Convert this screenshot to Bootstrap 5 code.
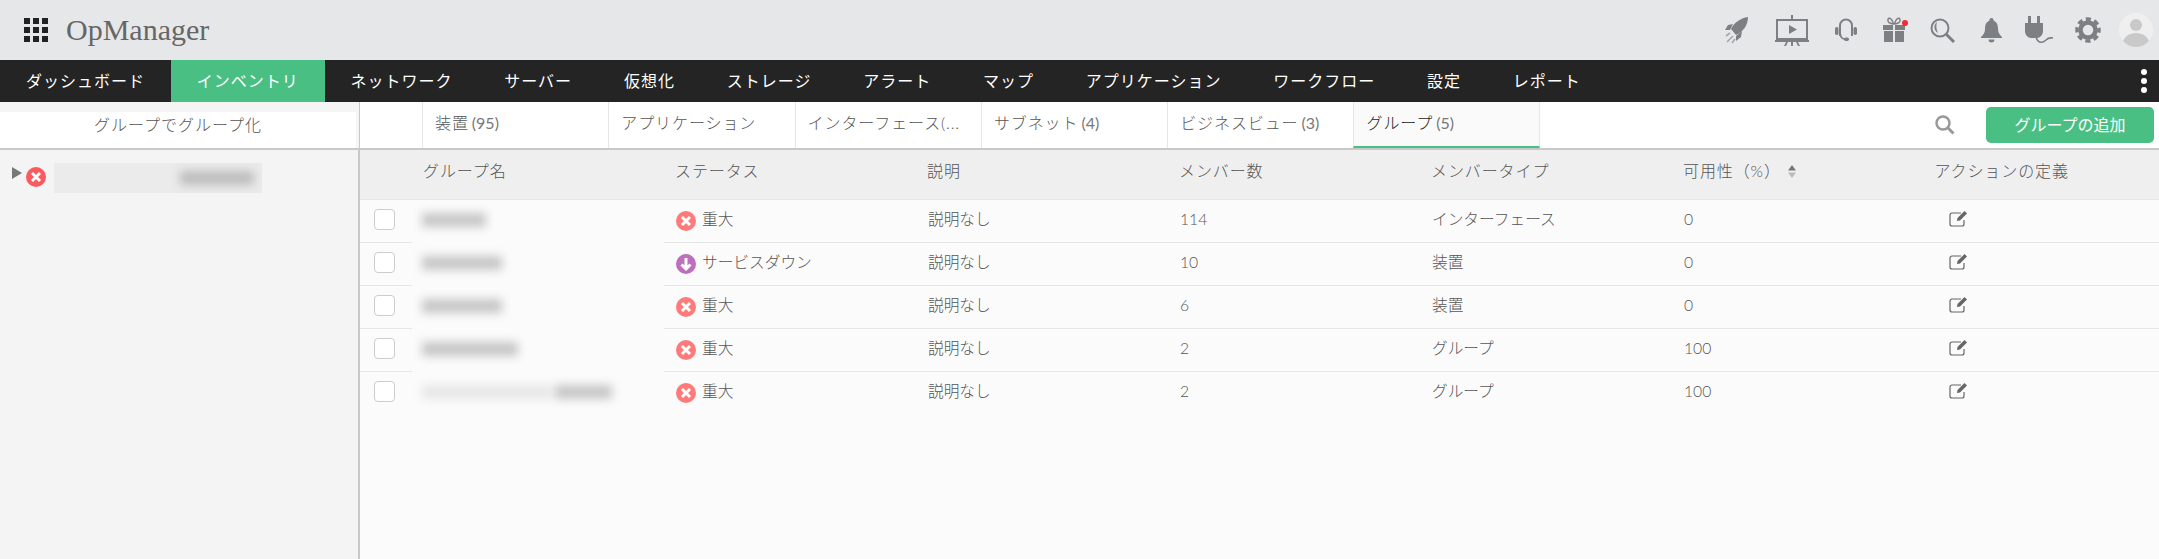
<!DOCTYPE html>
<html lang="ja">
<head>
    <meta charset="UTF-8">
    <meta name="viewport" content="width=device-width, initial-scale=1.0">
    <title>OpManager</title>
    <link href="https://cdn.jsdelivr.net/npm/bootstrap@5.3.2/dist/css/bootstrap.min.css" rel="stylesheet">
    <style>
        body {
            height: 559px;
            overflow: hidden;
            background-color: #fbfbfb;
            font-family: Lato, "Noto Sans CJK JP", sans-serif;
            font-weight: 300;
            color: #555;
        }
        .top-head {
            height: 60px;
            background-color: #e6e7e9;
            padding-left: 24px;
        }
        .grid-mark {
            display: grid;
            grid-template-columns: repeat(3, 6px);
            gap: 3px;
            margin-right: 18px;
        }
        .grid-mark i {
            height: 6px;
            background-color: #222;
        }
        .brand-name {
            font-family: "Liberation Serif", serif;
            font-size: 30px;
            color: #666;
            line-height: 1;
        }
        .head-icons {
            margin-left: auto;
            padding-right: 6px;
            gap: 0;
        }
        .head-icon {
            display: block;
            fill: #7d8083;
        }
        .main-menu {
            height: 42px;
            background-color: #242424;
        }
        .menu-item {
            display: block;
            padding: 0 25.9px;
            line-height: 41px;
            font-size: 16px;
            letter-spacing: 1px;
            font-weight: 400;
            color: #fff;
            text-decoration: none;
            white-space: nowrap;
        }
        .menu-item.menu-on {
            background-color: #4abf83;
        }
        .menu-more {
            margin-left: auto;
            margin-right: 12px;
            gap: 3px;
        }
        .menu-more i {
            width: 6px;
            height: 6px;
            border-radius: 50%;
            background-color: #fff;
        }
        .work-area {
            height: 457px;
        }
        .side-pane {
            width: 360px;
            flex: none;
            background-color: #f4f4f4;
            border-right: 2px solid #c8c8c8;
        }
        .side-title {
            height: 48px;
            margin-right: -1px;
            padding-top: 10px;
            background-color: #f5f5f5;
            border-bottom: 2px solid #c8c8c8;
        }
        .side-title div {
            height: 36px;
            margin-right: 3px;
            background-color: #fff;
            font-size: 16px;
            letter-spacing: 1px;
            text-align: center;
            line-height: 26px;
            color: #555;
        }
        .tree-row {
            padding: 13px 0 0 12px;
            height: 46px;
        }
        .tree-arrow {
            width: 0;
            height: 0;
            border-top: 6px solid transparent;
            border-bottom: 6px solid transparent;
            border-left: 10px solid #777;
            margin-right: 4px;
        }
        .tree-blur {
            width: 208px;
            height: 30px;
            margin-left: 8px;
            background-color: #ebebeb;
            overflow: hidden;
        }
        .tree-blur i {
            display: block;
            width: 74px;
            height: 14px;
            margin: 8px 0 0 126px;
            background-color: #bdbdbd;
            filter: blur(5px);
        }
        .content-pane {
            min-width: 0;
        }
        .sub-bar {
            height: 48px;
            background-color: #fff;
            border-bottom: 2px solid #c8c8c8;
            padding-left: 62px;
        }
        .sub-tab {
            width: 186.3px;
            height: 46px;
            padding: 9px 0 0 12px;
            border-left: 1px solid #e6e6e6;
            color: #555;
            font-size: 16px;
            letter-spacing: 0.9px;
            text-decoration: none;
            white-space: nowrap;
        }
        .sub-tab.tab-on {
            background-color: #fafafa;
            border-right: 1px solid #e6e6e6;
            border-bottom: 2px solid #4abf83;
            color: #222;
        }
        .tab-num {
            margin-left: 3px;
            font-size: 16px;
            font-weight: 400;
            letter-spacing: 0;
            color: #777;
        }
        .bar-tools {
            margin-left: auto;
            padding-right: 5px;
        }
        .add-btn {
            width: 168px;
            height: 36px;
            padding: 0;
            margin-left: 31px;
            font-size: 16px;
            font-weight: 400;
            color: #fff;
            background-color: #4abf83;
            border: 0;
            border-radius: 5px;
        }
        .group-table {
            table-layout: fixed;
            width: 100%;
            margin: 0;
            --bs-table-bg: transparent;
            color: #555;
            font-size: 15.7px;
        }
        .group-table th {
            height: 49px;
            padding: 0 0 6px 11px;
            background-color: #efefef;
            font-weight: 300;
            font-size: 16px;
            letter-spacing: 0.9px;
            color: #555;
            border-bottom: 1px solid #e6e6e6;
            vertical-align: middle;
            white-space: nowrap;
        }
        .group-table td {
            height: 43px;
            padding: 0 0 2px 12px;
            border-bottom: 1px solid #e6e6e6;
            vertical-align: middle;
        }
        .group-table tr:last-child td {
            border-bottom: 0;
        }
        .group-table td.name-cell {
            border-bottom-color: #fbfbfb;
            padding-left: 10px;
        }
        .group-table .action-head {
            padding-left: 19px;
        }
        .group-table .action-cell {
            padding: 0 0 6px 34px;
        }
        .col-check { width: 52px; }
        .col-data { width: 252px; }
        .row-check {
            width: 21px;
            height: 21px;
            margin: 0 0 0 2px;
            border: 1px solid #ccc;
            border-radius: 4px;
            display: block;
        }
        .name-blob {
            display: block;
            height: 14px;
            background-color: #c6c6c6;
            filter: blur(5px);
        }
        .name-blob.blob-two {
            background: linear-gradient(90deg, #e6e6e6 0 68%, #fbfbfb 68% 70%, #c6c6c6 70%);
        }
        .status-icon {
            vertical-align: -6px;
            margin-right: 6px;
        }
        .sort-mark {
            display: inline-block;
            vertical-align: -1px;
            margin-left: 7px;
        }
    </style>
</head>
<body>
    <header class="top-head d-flex align-items-center">
        <div class="grid-mark">
            <i></i><i></i><i></i><i></i><i></i><i></i><i></i><i></i><i></i>
        </div>
        <div class="brand-name">OpManager</div>
        <div class="head-icons d-flex align-items-center">
            <!-- rocket -->
            <svg class="head-icon" style="margin-right:26px" width="24" height="28" viewBox="0 0 24 28">
                <path d="M23 1C15 2 9 7 6 13l5 6c7-3 12-10 12-18z"/>
                <path d="M8 8l-5 1-3 5h5zM17 15l-1 6-5 4v-5z"/>
                <path d="M1 20l4-3M2 26l6-6M7 27l3-4" stroke="#a5a7a9" stroke-width="1.600" fill="none"/>
            </svg>
            <!-- presentation -->
            <svg class="head-icon" style="margin-right:26px" width="34" height="31" viewBox="0 0 34 31">
                <path d="M1 4h32v21H1zM3 6v17h28V6z" fill-rule="evenodd"/>
                <path d="M16 0h2v4h-2zM14 10l8 4.500-8 4.500zM0 25h34v2H0zM11 27h2l-2 4H9zM16 27h2v4h-2zM21 27h2l2 4h-2z"/>
            </svg>
            <!-- headset -->
            <svg class="head-icon" style="margin-right:25px" width="22" height="25" viewBox="0 0 22 25">
                <path d="M5 18V7.500a6 6 0 0 1 12 0V18" fill="none" stroke="#7d8083" stroke-width="2"/>
                <path d="M5.500 16c0 3 2 5 5 5" fill="none" stroke="#7d8083" stroke-width="1.600"/>
                <rect x="0" y="9" width="3.500" height="8" rx="1.700"/>
                <rect x="18.500" y="9" width="3.500" height="8" rx="1.700"/>
                <rect x="9" y="19.500" width="5" height="3.500" rx="1.700"/>
            </svg>
            <!-- gift -->
            <svg class="head-icon" style="margin-right:22px" width="26" height="26" viewBox="0 0 26 26">
                <path d="M1 8h10v5H1zM13 8h10v5H13zM2 14h9v11H2zM13 14h9v11h-9z"/>
                <path d="M11.500 7C8 7 5 5 6 2.500S10 1 11.500 7zM12.500 7c3.500 0 6.500-2 5.500-4.500S14 1 12.500 7z" fill="none" stroke="#7d8083" stroke-width="1.500"/>
                <circle cx="23" cy="6" r="3" fill="#ef2b36"/>
            </svg>
            <!-- magnifier -->
            <svg class="head-icon" style="margin-right:25px" width="26" height="25" viewBox="0 0 26 25">
                <circle cx="10" cy="10" r="8.500" fill="none" stroke="#7d8083" stroke-width="2"/>
                <path d="M7 4C3 7 4 13 8 15 6 11 6 7 7 4z"/>
                <path d="M16 16l8 8" stroke="#7d8083" stroke-width="3"/>
            </svg>
            <!-- bell -->
            <svg class="head-icon" style="margin-right:23px" width="21" height="25" viewBox="0 0 21 25">
                <path d="M10.500 0a2 2 0 0 1 2 2.500C16 4 17 7 17 11c0 4 2 6 4 8v1H0v-1c2-2 4-4 4-8 0-4 1-7 4.500-8.500a2 2 0 0 1 2-2.500zM7.500 21.500h6a3 3 0 0 1-6 0z"/>
            </svg>
            <!-- plug -->
            <svg class="head-icon" style="margin-right:22px" width="28" height="28" viewBox="0 0 28 28">
                <path d="M3 0h3v7h6V0h3v7h3v8c0 4-3 7-6 7h-6c-3 0-6-3-6-7V7h3z"/>
                <path d="M11 21c2 7 7 6 10 3s4-2 7-2" fill="none" stroke="#7d8083" stroke-width="1.600"/>
            </svg>
            <!-- gear -->
            <svg class="head-icon" style="margin-right:18px" width="26" height="26" viewBox="0 0 26 26">
                <circle cx="13" cy="13" r="7.500" fill="none" stroke="#7d8083" stroke-width="4.500"/>
                <circle cx="13" cy="13" r="11" fill="none" stroke="#7d8083" stroke-width="3.500" stroke-dasharray="5.200 3.440" stroke-dashoffset="2.600"/>
            </svg>
            <!-- avatar -->
            <svg width="34" height="34" viewBox="0 0 34 34">
                <defs><clipPath id="avatarClip"><circle cx="17" cy="17" r="17"/></clipPath></defs>
                <circle cx="17" cy="17" r="17" fill="#efefef"/>
                <g clip-path="url(#avatarClip)" fill="#c9c9c9">
                    <circle cx="17" cy="12" r="6"/>
                    <path d="M3 34c0-9 6-14 14-14s14 5 14 14z"/>
                </g>
            </svg>
        </div>
    </header>

    <nav class="main-menu d-flex">
        <a class="menu-item" href="#">ダッシュボード</a>
        <a class="menu-item menu-on" href="#">インベントリ</a>
        <a class="menu-item" href="#">ネットワーク</a>
        <a class="menu-item" href="#">サーバー</a>
        <a class="menu-item" href="#">仮想化</a>
        <a class="menu-item" href="#">ストレージ</a>
        <a class="menu-item" href="#">アラート</a>
        <a class="menu-item" href="#">マップ</a>
        <a class="menu-item" href="#">アプリケーション</a>
        <a class="menu-item" href="#">ワークフロー</a>
        <a class="menu-item" href="#">設定</a>
        <a class="menu-item" href="#">レポート</a>
        <div class="menu-more d-flex flex-column justify-content-center">
            <i></i><i></i><i></i>
        </div>
    </nav>

    <div class="work-area d-flex">
        <aside class="side-pane">
            <div class="side-title"><div>グループでグループ化</div></div>
            <div class="tree-row d-flex align-items-start">
                <span class="tree-arrow mt-1"></span>
                <svg class="mt-1" width="20" height="20" viewBox="0 0 20 20">
                    <circle cx="10" cy="10" r="10" fill="#fb5a5f"/>
                    <path d="M6 6l8 8M14 6l-8 8" stroke="#fff" stroke-width="3"/>
                </svg>
                <div class="tree-blur"><i></i></div>
            </div>
        </aside>

        <section class="content-pane flex-grow-1">
            <div class="sub-bar d-flex">
                <a class="sub-tab" href="#">装置<span class="tab-num">(95)</span></a>
                <a class="sub-tab" href="#">アプリケーション</a>
                <a class="sub-tab" href="#">インターフェース(...</a>
                <a class="sub-tab" href="#">サブネット<span class="tab-num">(4)</span></a>
                <a class="sub-tab" href="#">ビジネスビュー<span class="tab-num">(3)</span></a>
                <a class="sub-tab tab-on" href="#">グループ<span class="tab-num">(5)</span></a>
                <div class="bar-tools d-flex align-items-center">
                    <svg width="20" height="20" viewBox="0 0 20 20">
                        <circle cx="8" cy="8" r="6.500" fill="none" stroke="#999" stroke-width="2.500"/>
                        <path d="M12.500 12.500l6 6" stroke="#999" stroke-width="3"/>
                    </svg>
                    <button class="btn add-btn" type="button">グループの追加</button>
                </div>
            </div>

            <table class="table group-table">
                <colgroup>
                    <col class="col-check">
                    <col class="col-data"><col class="col-data"><col class="col-data">
                    <col class="col-data"><col class="col-data">
                    <col>
                </colgroup>
                <thead>
                    <tr>
                        <th></th>
                        <th>グループ名</th>
                        <th>ステータス</th>
                        <th>説明</th>
                        <th>メンバー数</th>
                        <th>メンバータイプ</th>
                        <th>可用性（%）<svg class="sort-mark" width="8" height="13" viewBox="0 0 8 13">
                                <path d="M4 0l4 5.500H0z" fill="#777"/>
                                <path d="M0 7.500h8L4 13z" fill="#bbb"/>
                            </svg>
                        </th>
                        <th class="action-head">アクションの定義</th>
                    </tr>
                </thead>
                <tbody id="group-rows"></tbody>
            </table>
        </section>
    </div>

    <script src="https://cdn.jsdelivr.net/npm/bootstrap@5.3.2/dist/js/bootstrap.bundle.min.js"></script>
    <script>
        const criticalIcon = '<svg class="status-icon" width="20" height="20" viewBox="0 0 20 20"><circle cx="10" cy="10" r="10" fill="#fd7b7b"/><path d="M6 6l8 8M14 6l-8 8" stroke="#fff" stroke-width="3"/></svg>';
        const downIcon = '<svg class="status-icon" width="20" height="20" viewBox="0 0 20 20"><circle cx="10" cy="10" r="10" fill="#bb6fbd"/><path d="M10 4v11M5.500 10.500l4.500 4.500 4.500-4.500" fill="none" stroke="#fff" stroke-width="3"/></svg>';
        const editIcon = '<svg width="20" height="18" viewBox="0 0 20 18"><path d="M12 3H3a2 2 0 0 0-2 2v9a2 2 0 0 0 2 2h10a2 2 0 0 0 2-2V10" fill="none" stroke="#666" stroke-width="1.200"/><path d="M8 11l.500-3 7-7 2.500 2.500-7 7z" fill="#666"/></svg>';

        const rows = [
            { blob: 64, two: false, icon: criticalIcon, status: '重大', count: 114, type: 'インターフェース', avail: 0 },
            { blob: 80, two: false, icon: downIcon, status: 'サービスダウン', count: 10, type: '装置', avail: 0 },
            { blob: 80, two: false, icon: criticalIcon, status: '重大', count: 6, type: '装置', avail: 0 },
            { blob: 96, two: false, icon: criticalIcon, status: '重大', count: 2, type: 'グループ', avail: 100 },
            { blob: 190, two: true, icon: criticalIcon, status: '重大', count: 2, type: 'グループ', avail: 100 }
        ];

        document.getElementById('group-rows').innerHTML = rows.map(r => `
            <tr>
                <td><input class="form-check-input row-check" type="checkbox"></td>
                <td class="name-cell"><span class="name-blob ${r.two ? 'blob-two' : ''}" style="width:${r.blob}px"></span></td>
                <td>${r.icon}${r.status}</td>
                <td>説明なし</td>
                <td>${r.count}</td>
                <td>${r.type}</td>
                <td>${r.avail}</td>
                <td class="action-cell">${editIcon}</td>
            </tr>`).join('');
    </script>
</body>
</html>
